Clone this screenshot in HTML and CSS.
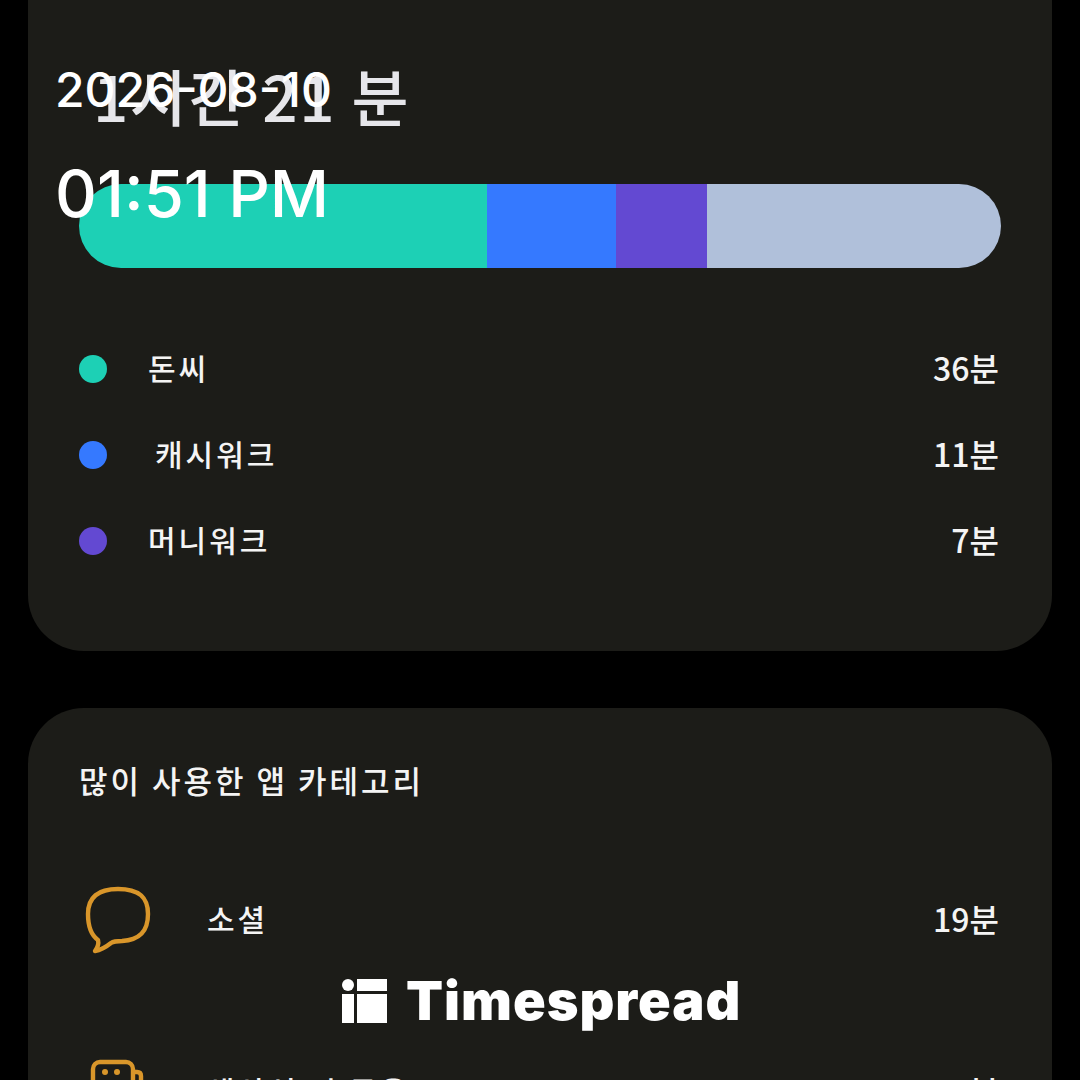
FILE: index.html
```html
<!DOCTYPE html>
<html>
	<head>
		<meta charset="UTF-8">
		<title>Timespread</title>
		<link rel="stylesheet" href="styles.css">
	</head>
	<body>
		<div class="page">
			<div class="card first">
				<h1 class="total">1시간 21 분</h1>
				<div class="bar">
					<div class="seg teal"></div>
					<div class="seg blue"></div>
					<div class="seg purple"></div>
					<div class="seg rest"></div>
				</div>
				<div class="row legend">
					<span class="dot teal"></span>
					<span class="name">돈씨</span>
					<span class="mins">36분</span>
				</div>
				<div class="row legend">
					<span class="dot blue"></span>
					<span class="name nudge">캐시워크</span>
					<span class="mins">11분</span>
				</div>
				<div class="row legend">
					<span class="dot purple"></span>
					<span class="name">머니워크</span>
					<span class="mins">7분</span>
				</div>
			</div>

			<div class="card second">
				<h2 class="sub">많이 사용한 앱 카테고리</h2>
				<div class="row cat">
					<svg class="icon" viewBox="0 0 66 68" fill="none" stroke="#d9962a" stroke-width="4.4" stroke-linejoin="round">
						<path d="M33 3C54 3 63 11 63 28C63 46 54 54 37 55C32 55 29 55 26 57C21 61 16 64 10 65C13 61 14 58 13 54C6 49 3 41 3 28C3 11 13 3 33 3Z"/>
					</svg>
					<span class="name">소셜</span>
					<span class="mins">19분</span>
				</div>
				<div class="row cat">
					<svg class="icon" viewBox="0 0 66 68" fill="none" stroke="#d9962a" stroke-width="4.4">
						<rect x="8" y="4" width="40" height="50" rx="7"/>
						<path d="M48 14H52Q56 14 56 18V52"/>
						<circle cx="20" cy="14" r="3" fill="#d9962a" stroke="none"/>
						<circle cx="32" cy="14" r="3" fill="#d9962a" stroke="none"/>
					</svg>
					<span class="name">생산성 및 금융</span>
					<span class="mins">8분</span>
				</div>
			</div>
		</div>

		<div class="stamp">
			<div class="date">2026-08-10</div>
			<div class="time">01:51 PM</div>
		</div>

		<div class="logo">
			<svg class="logo-mark" viewBox="0 0 45 44" fill="#fff">
				<circle cx="6" cy="6" r="6"/>
				<rect x="0" y="15" width="12" height="29"/>
				<rect x="15" y="0" width="30" height="12"/>
				<rect x="15" y="15" width="30" height="29"/>
			</svg>
			<span class="logo-text">Timespread</span>
		</div>
	</body>
</html>
```

FILE: styles.css
```css
html, body{
	margin: 0;
	height: 1080px;
	overflow: hidden;
	background: #000;
}
body{
	position: relative;
	font-family: "Noto Sans CJK KR", "Noto Sans", sans-serif;
	color: #f4f4f4;
}
.page{
	display: flex;
	flex-direction: column;
	gap: 57px;
	margin-top: -60px;
	padding: 0 28px;
}
.card{
	background: #1c1c18;
	border-radius: 56px;
	padding: 0 51px;
}
.first{
	height: 711px;
	box-sizing: border-box;
	padding-top: 113px;
}
.second{
	padding-top: 48px;
	height: 600px;
}
.total{
	margin: 0 0 0 14px;
	height: 131px;
	font-size: 62px;
	line-height: 84px;
	font-weight: 500;
	letter-spacing: 1.5px;
	color: #e6e6ea;
}
.bar{
	display: flex;
	height: 84px;
	margin-bottom: 58px;
	border-radius: 42px;
	overflow: hidden;
}
.seg.teal{ width: 408px; }
.seg.blue{ width: 129px; }
.seg.purple{ width: 91px; }
.seg.rest{ flex: 1; }
.teal{ background: #1dd0b5; }
.blue{ background: #3579ff; }
.purple{ background: #6349d2; }
.rest{ background: #b0c0da; }
.row{
	display: flex;
	align-items: center;
}
.legend{
	height: 86px;
}
.dot{
	width: 28px;
	height: 28px;
	border-radius: 50%;
	margin-right: 41px;
}
.name{
	font-size: 30px;
	font-weight: 500;
	letter-spacing: 3px;
	padding-bottom: 4px;
}
.nudge{
	margin-left: 7px;
}
.mins{
	margin-left: auto;
	margin-right: 2px;
	padding-bottom: 4px;
	font-size: 32px;
	font-weight: 500;
}
.sub{
	margin: 0;
	height: 78px;
	font-size: 31px;
	line-height: 48px;
	font-weight: 500;
	letter-spacing: 3px;
}
.cat{
	height: 172px;
}
.cat .icon{
	width: 66px;
	height: 68px;
	margin: 0 56px 0 6px;
}
.stamp{
	position: absolute;
	left: 55px;
	top: 60px;
	font-family: Inter, sans-serif;
	font-weight: 500;
	color: #fff;
}
.date{
	font-size: 48px;
	line-height: 60px;
}
.time{
	font-size: 65px;
	line-height: 80px;
	margin-top: 34px;
}
.logo{
	position: absolute;
	left: 342px;
	top: 972px;
	display: flex;
	align-items: center;
	gap: 19px;
}
.logo-mark{
	width: 45px;
	height: 44px;
}
.logo-text{
	font-family: Inter, sans-serif;
	font-size: 54px;
	font-weight: 900;
	line-height: 58px;
	letter-spacing: 1px;
	color: #fff;
}
```
